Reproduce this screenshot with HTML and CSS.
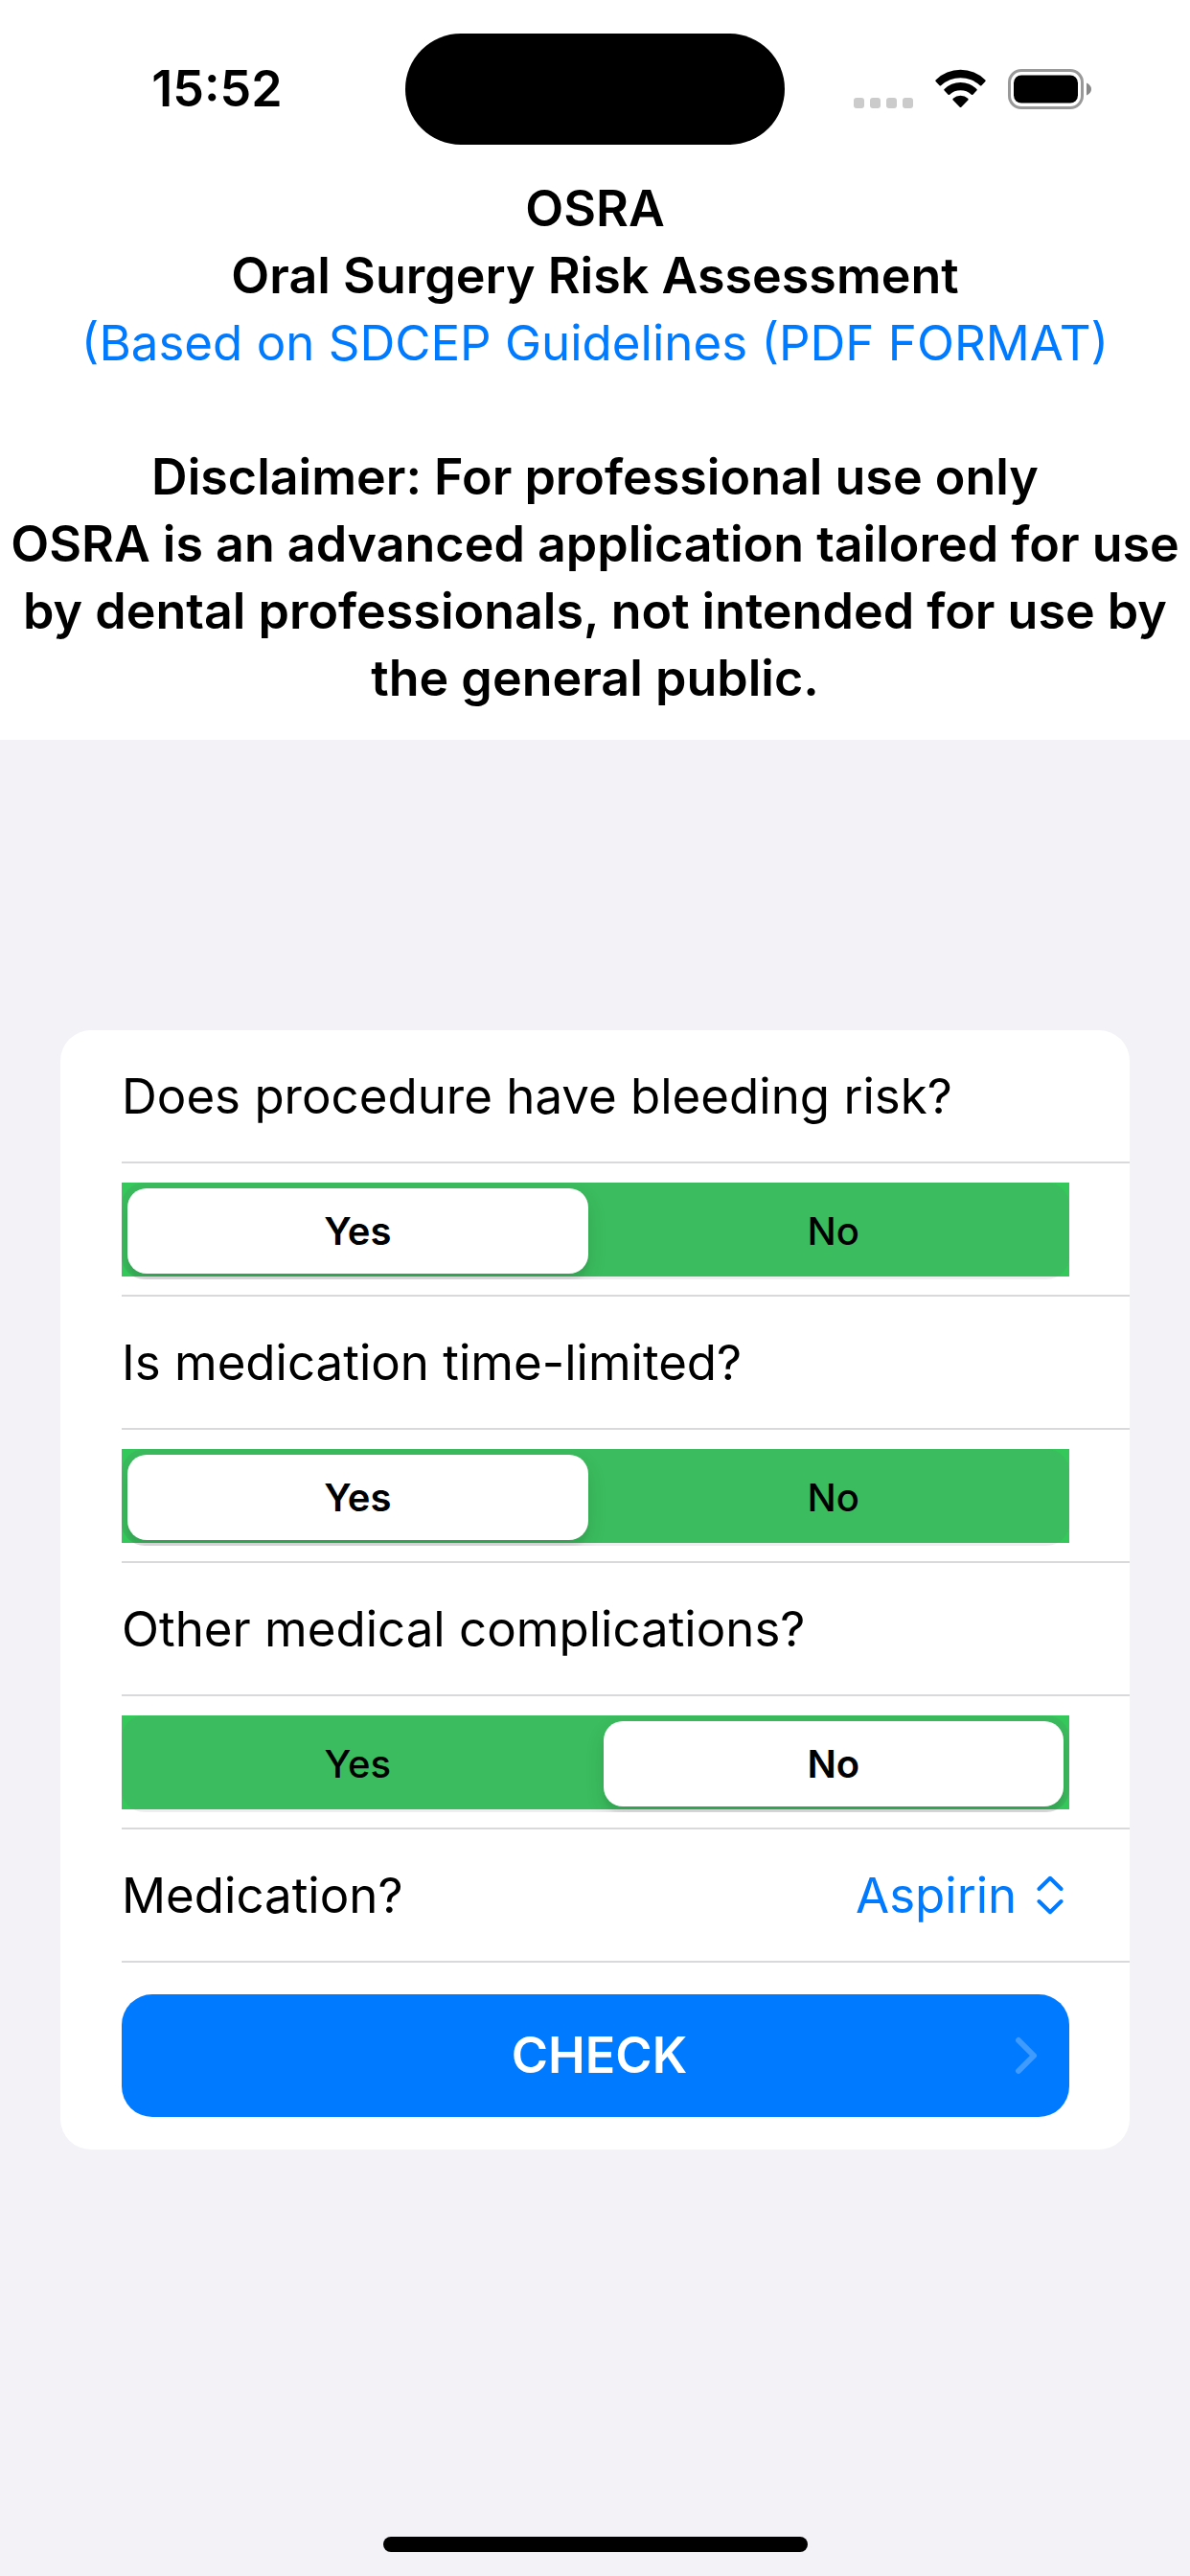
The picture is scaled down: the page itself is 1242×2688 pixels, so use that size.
FILE: index.html
```html
<!DOCTYPE html>
<html lang="en">
<head>
    <meta charset="UTF-8">
    <meta name="viewport" content="width=device-width, initial-scale=1.0">
    <title>OSRA</title>
    <link rel="stylesheet" href="styles.css">
</head>
<body>
    <header class="header">
        <div class="status-bar">
            <div class="time">15:52</div>
            <div class="island"></div>
            <div class="status-icons">
                <svg class="icon-dots" width="62" height="41" viewBox="0 0 62 41" fill="#cbcbcb">
                    <rect x="0" y="30" width="11" height="11" rx="3"/>
                    <rect x="17" y="30" width="11" height="11" rx="3"/>
                    <rect x="34" y="30" width="11" height="11" rx="3"/>
                    <rect x="51" y="30" width="11" height="11" rx="3"/>
                </svg>
                <svg class="icon-wifi" width="53" height="41" viewBox="0 0 53 41">
                    <path d="M0.6 11.4 A37 37 0 0 1 52.4 11.4 Q53 12.200 52.4 12.900 L48.4 17.2 Q47.6 17.900 46.9 17.2 A30 30 0 0 0 6.1 17.2 Q5.4 17.900 4.6 17.2 L0.6 12.900 Q0 12.200 0.6 11.4 Z"/>
                    <path d="M9.6 21 A24 24 0 0 1 43.4 21 Q44.1 21.700 43.4 22.4 L39.4 26.700 Q38.6 27.400 37.9 26.700 A17 17 0 0 0 15.1 26.700 Q14.4 27.400 13.6 26.700 L9.6 22.4 Q8.9 21.700 9.6 21 Z"/>
                    <path d="M18.700 30.800 A11.5 11.5 0 0 1 34.300 30.800 Q35 31.600 34.300 32.400 L27.300 39.7 Q26.5 40.5 25.7 39.7 L18.700 32.400 Q18 31.600 18.700 30.800 Z"/>
                </svg>
                <svg class="icon-battery" width="88" height="42" viewBox="0 0 88 42">
                    <rect x="1.5" y="1.5" width="76" height="39" rx="12.5" fill="none" stroke="#999" stroke-width="3"/>
                    <rect x="6" y="6.5" width="67" height="29" rx="8"/>
                    <path d="M82 14.5 Q87 17 87 21 Q87 25 82 27.5 Z" fill="#888"/>
                </svg>
            </div>
        </div>
        <div class="intro">
            <h1>OSRA<br>Oral Surgery Risk Assessment</h1>
            <a href="#">(Based on SDCEP Guidelines (PDF FORMAT)</a>
            <p class="disclaimer">Disclaimer: For professional use only<br>OSRA is an advanced application tailored for use by dental professionals, not intended for use by the general public.</p>
        </div>
    </header>

    <main class="content">
        <form class="card">
            <div class="row" id="bleeding-label">Does procedure have bleeding risk?</div>
            <div class="row">
                <div class="segmented" role="radiogroup" aria-labelledby="bleeding-label">
                    <div class="track">
                        <input type="radio" name="bleeding" id="bleeding-yes" checked>
                        <label for="bleeding-yes">Yes</label>
                        <input type="radio" name="bleeding" id="bleeding-no">
                        <label for="bleeding-no">No</label>
                    </div>
                </div>
            </div>
            <div class="row" id="limited-label">Is medication time-limited?</div>
            <div class="row">
                <div class="segmented" role="radiogroup" aria-labelledby="limited-label">
                    <div class="track">
                        <input type="radio" name="limited" id="limited-yes" checked>
                        <label for="limited-yes">Yes</label>
                        <input type="radio" name="limited" id="limited-no">
                        <label for="limited-no">No</label>
                    </div>
                </div>
            </div>
            <div class="row" id="complications-label">Other medical complications?</div>
            <div class="row">
                <div class="segmented" role="radiogroup" aria-labelledby="complications-label">
                    <div class="track">
                        <input type="radio" name="complications" id="complications-yes">
                        <label for="complications-yes">Yes</label>
                        <input type="radio" name="complications" id="complications-no" checked>
                        <label for="complications-no">No</label>
                    </div>
                </div>
            </div>
            <div class="row">
                <label for="medication">Medication?</label>
                <div class="picker">
                    <select id="medication">
                        <option>Aspirin</option>
                    </select>
                    <svg width="28" height="41" viewBox="0 0 28 41" fill="none" stroke="#007aff" stroke-width="4" stroke-linecap="round" stroke-linejoin="round">
                        <path d="M2.5 14 L14 2.8 L25.5 14"/>
                        <path d="M2.5 27 L14 38.2 L25.5 27"/>
                    </svg>
                </div>
            </div>
            <div class="submit-row">
                <button type="button" class="check">
                    <span>CHECK</span>
                    <svg width="24" height="40" viewBox="0 0 24 40" fill="none" stroke="#409bff" stroke-width="6" stroke-linecap="round" stroke-linejoin="round">
                        <path d="M4 4 L20 20 L4 36"/>
                    </svg>
                </button>
            </div>
        </form>
    </main>

    <footer class="home">
        <div class="home-bar"></div>
    </footer>
</body>
</html>
```

FILE: styles.css
```css
* {
    box-sizing: border-box;
}
body {
    display: flex;
    flex-direction: column;
    min-height: 100vh;
    margin: 0;
    background-color: #f2f2f7;
    color: #000;
    font-family: Inter, "Liberation Sans", sans-serif;
    font-size: 51px;
    line-height: 70px;
}
.header {
    padding-bottom: 29px;
    background-color: white;
}
.status-bar {
    display: grid;
    grid-template-columns: 1fr 396px 1fr;
    align-items: center;
    padding-top: 35px;
}
.time {
    padding-left: 30px;
    font-size: 52px;
    font-weight: 600;
    text-align: center;
}
.island {
    height: 116px;
    border-radius: 58px;
    background-color: black;
}
.status-icons {
    display: flex;
    justify-content: flex-end;
    gap: 23px;
    padding-right: 102px;
}
.intro {
    padding: 32px 8px 0;
    text-align: center;
}
h1 {
    margin: 0;
    font-size: 52px;
    font-weight: 600;
}
a {
    color: #007aff;
    text-decoration: none;
}
.disclaimer {
    margin: 70px 0 0;
    font-size: 52px;
    font-weight: 600;
}
.content {
    flex: 1;
    padding: 303px 63px 60px;
}
.card {
    padding-left: 64px;
    border-radius: 32px;
    background-color: white;
}
.row {
    display: flex;
    align-items: center;
    justify-content: space-between;
    height: 139px;
    padding-right: 63px;
    border-bottom: 2px solid #d9d9db;
}
.segmented {
    flex: 1;
    height: 98px;
    background-color: #34c759;
}
/* the track hangs slightly below its green background */
.track {
    position: relative;
    display: flex;
    gap: 16px;
    height: 101px;
    padding: 6px;
    border-radius: 24px;
    background-color: rgba(118, 118, 128, 0.12);
    overflow: hidden;
}
.track input {
    position: absolute;
    opacity: 0;
}
.track label {
    flex: 1 1 0;
    border-radius: 20px;
    font-size: 40px;
    font-weight: 500;
    line-height: 90px;
    text-align: center;
}
.track input:checked + label {
    background-color: white;
    font-weight: 600;
    box-shadow: 0 8px 20px rgba(0, 0, 0, 0.12), 0 8px 3px rgba(0, 0, 0, 0.04);
}
.picker {
    display: flex;
    align-items: center;
    gap: 20px;
    padding-right: 6px;
}
.picker select {
    appearance: none;
    padding: 0;
    border: none;
    background: none;
    color: #007aff;
    font: inherit;
}
.submit-row {
    padding: 33px 63px 34px 0;
}
.check {
    display: grid;
    grid-template-columns: 1fr auto 1fr;
    align-items: center;
    width: 100%;
    height: 128px;
    padding: 0 33px 0 41px;
    border: none;
    border-radius: 32px;
    background-color: #007aff;
    color: white;
    font: inherit;
    font-size: 52px;
    font-weight: 600;
}
.check span {
    grid-column: 2;
}
.check svg {
    justify-self: end;
}
.home {
    display: flex;
    justify-content: center;
    padding-bottom: 25px;
}
.home-bar {
    width: 443px;
    height: 16px;
    border-radius: 8px;
    background-color: black;
}
```
